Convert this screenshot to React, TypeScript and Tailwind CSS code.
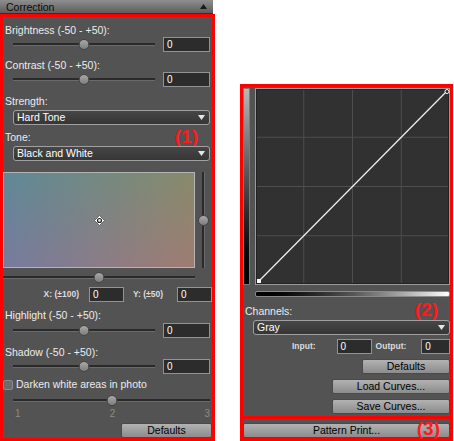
import React from 'react';

const panel = 'bg-[#535353]';

function Label({ children, className = '' }: { children: React.ReactNode; className?: string }) {
  return <div className={`h-[14px] leading-[14px] text-[10.5px] text-[#ececec] pl-[2px] ${className}`}>{children}</div>;
}

function Track({ className = '' }: { className?: string }) {
  return (
    <div className={`relative flex items-center ${className}`}>
      <div className="w-full h-[3px] bg-[#2a2a2a] border-b border-[#6a6a6a]" />
      <div className="absolute left-1/2 -translate-x-1/2 w-[11px] h-[11px] rounded-full bg-linear-to-b from-[#a8a8a8] to-[#7e7e7e] border border-[#444]" />
    </div>
  );
}

function NumBox({ className = 'w-[47px]' }: { className?: string }) {
  return (
    <div className={`h-[15px] bg-[#2c2c2c] border border-[#939393] text-[10px] leading-[13px] text-white pl-[3px] ${className}`}>
      0
    </div>
  );
}

function SliderRow() {
  return (
    <div className="flex items-center h-[15px]">
      <Track className="ml-[10px] w-[142px] h-[15px]" />
      <NumBox className="ml-[8px] w-[47px]" />
    </div>
  );
}

function Select({ value, className = '' }: { value: string; className?: string }) {
  return (
    <div
      className={`h-[15px] flex items-center justify-between bg-linear-to-b from-[#464646] to-[#363636] border border-[#a0a0a0] rounded-[3px] pl-[3px] pr-[4px] ${className}`}
    >
      <span className="text-[10.5px] leading-[13px] text-white">{value}</span>
      <svg width="7" height="5" viewBox="0 0 7 5">
        <path d="M0 0 H7 L3.5 5 Z" fill="#e6e6e6" />
      </svg>
    </div>
  );
}

function Button({ children, className = '' }: { children: React.ReactNode; className?: string }) {
  return (
    <div
      className={`h-[15px] flex items-center justify-center bg-linear-to-b from-[#b2b2b2] to-[#8c8c8c] border border-[#4a4a4a] rounded-[2px] text-[10.5px] text-[#000] ${className}`}
    >
      {children}
    </div>
  );
}

function Crosshair() {
  return (
    <svg width="11" height="11" viewBox="0 0 11 11">
      <path d="M5.5 0.5 L10.5 5.5 L5.5 10.5 L0.5 5.5 Z" fill="#ffffff" stroke="#333" strokeWidth="0.6" />
      <circle cx="5.5" cy="5.5" r="2.6" fill="#222" />
      <circle cx="5.5" cy="5.5" r="1.4" fill="#ddd" />
    </svg>
  );
}

function CurveGrid() {
  const xs = [48.75, 97.5, 146.25];
  const ys = [49.25, 98.5, 147.75];
  return (
    <svg width="195" height="197" viewBox="0 0 195 197" className="block">
      <rect x="0.5" y="0.5" width="194" height="196" fill="#313131" stroke="#9a9a9a" />
      <rect x="1.5" y="1.5" width="192" height="194" fill="none" stroke="#222" />
      {xs.map((x) => (
        <line key={x} x1={x} y1="2" x2={x} y2="195" stroke="#4e4e4e" strokeWidth="1" />
      ))}
      {ys.map((y) => (
        <line key={y} x1="2" y1={y} x2="193" y2={y} stroke="#4e4e4e" strokeWidth="1" />
      ))}
      <line x1="4" y1="193" x2="192" y2="3" stroke="#f2f2f2" strokeWidth="1.2" />
      <rect x="2" y="191" width="4" height="4" fill="#fff" />
      <circle cx="192" cy="3.5" r="2" fill="#222" stroke="#fff" strokeWidth="1" />
    </svg>
  );
}

export default function App() {
  return (
    <div className="w-[454px] h-[441px] bg-white flex overflow-hidden font-['Liberation_Sans',Arial,sans-serif]">
      {/* Left: Correction panel */}
      <div className="w-[215px] flex flex-col">
        <div className="w-[213px] h-[14px] flex items-center justify-between bg-linear-to-b from-[#8e8e8e] to-[#5e5e5e] border-b border-[#303030] pl-[6px] pr-[6px]">
          <span className="text-[10.5px] leading-[12px] text-[#0a0a0a]">Correction</span>
          <svg width="7" height="5" viewBox="0 0 7 5">
            <path d="M0 5 H7 L3.5 0 Z" fill="#1a1a1a" />
          </svg>
        </div>
        <div className={`flex-1 border-[3px] border-[#ff0000] ${panel} flex flex-col`}>
          <Label className="mt-[6px]">Brightness (-50 - +50):</Label>
          <SliderRow />
          <Label className="mt-[6px]">Contrast (-50 - +50):</Label>
          <SliderRow />
          <Label className="mt-[7px]">Strength:</Label>
          <Select value="Hard Tone" className="mt-[2px] ml-[10px] w-[197px]" />
          <div className="mt-[5px] h-[14px] flex items-center justify-between pr-[14px]">
            <Label>Tone:</Label>
            <span className="text-[19px] leading-none font-bold text-[#ff1a1a] mt-[-2px]">(1)</span>
          </div>
          <Select value="Black and White" className="mt-[2px] ml-[10px] w-[197px]" />

          <div className="mt-[11px] flex h-[96px]">
            <div className="w-[192px] h-full border border-[#b4b4b4] flex items-center justify-center bg-[linear-gradient(to_right,rgba(60,130,180,0.34),rgba(180,135,50,0.34)),linear-gradient(to_bottom,#718c88,#957792)]">
              <Crosshair />
            </div>
            <div className="relative flex-1 flex justify-center items-center">
              <div className="w-[3px] h-full bg-[#2a2a2a] border-r border-[#6a6a6a]" />
              <div className="absolute w-[11px] h-[11px] rounded-full bg-linear-to-b from-[#a8a8a8] to-[#7e7e7e] border border-[#444]" />
            </div>
          </div>
          <Track className="mt-[4px] w-[192px] h-[11px]" />

          <div className="mt-[4px] h-[14px] flex items-center justify-end">
            <span className="text-[8.5px] font-bold text-[#dcdcdc]">X: (±100)</span>
            <NumBox className="ml-[10px] w-[35px]" />
            <span className="ml-[9px] text-[8.5px] font-bold text-[#dcdcdc]">Y: (±50)</span>
            <NumBox className="ml-[14px] w-[35px]" />
          </div>

          <Label className="mt-[7px]">Highlight (-50 - +50):</Label>
          <div className="mt-[1px]">
            <SliderRow />
          </div>
          <Label className="mt-[7px]">Shadow (-50 - +50):</Label>
          <SliderRow />

          <div className="mt-[4px] h-[14px] flex items-center">
            <div className="w-[10px] h-[10px] bg-[#6c6c6c] border border-[#8c8c8c] rounded-[2px]" />
            <span className="ml-[3px] text-[10.5px] text-[#ececec]">Darken white areas in photo</span>
          </div>
          <Track className="mt-[2px] ml-[10px] w-[197px] h-[12px]" />
          <div className="mt-[2px] h-[12px] flex justify-between pl-[12px] pr-[2px] text-[10px] leading-[12px] text-[#8a8a8a]">
            <span>1</span>
            <span>2</span>
            <span>3</span>
          </div>
          <div className="mt-[3px] flex justify-end">
            <Button className="w-[91px]">Defaults</Button>
          </div>
        </div>
      </div>

      {/* Right: Curves panel */}
      <div className="ml-[25px] w-[213px] flex flex-col mt-[84px]">
        <div className={`h-[335px] border-[3px] border-[#ff0000] ${panel} flex flex-col`}>
          <div className="mt-[1px] flex h-[197px]">
            <div className="w-[7px] h-full border border-[#7a7a7a] bg-linear-to-b from-[#b8b8b8] via-[#4a4a4a] to-[#000000]" />
            <div className="ml-[5px]">
              <CurveGrid />
            </div>
          </div>
          <div className="mt-[6px] ml-[12px] h-[6px] border border-[#8a8a8a] rounded-[2px] bg-linear-to-r from-[#000000] via-[#555555] to-[#ffffff]" />
          <div className="mt-[7px] h-[14px] flex items-center justify-between pr-[12px]">
            <Label>Channels:</Label>
            <span className="text-[19px] leading-none font-bold text-[#ff1a1a] mt-[-4px]">(2)</span>
          </div>
          <Select value="Gray" className="mt-[2px] ml-[10px]" />
          <div className="mt-[4px] h-[14px] flex items-center">
            <span className="ml-[49px] text-[8.5px] font-bold text-[#dcdcdc]">Input:</span>
            <NumBox className="ml-[21px] w-[35px]" />
            <span className="ml-[4px] text-[8.5px] font-bold text-[#dcdcdc]">Output:</span>
            <NumBox className="ml-[15px] flex-1" />
          </div>
          <div className="mt-[6px] flex justify-end">
            <Button className="w-[88px]">Defaults</Button>
          </div>
          <div className="mt-[5px] flex justify-end">
            <Button className="w-[118px]">Load Curves...</Button>
          </div>
          <div className="mt-[5px] flex justify-end">
            <Button className="w-[118px]">Save Curves...</Button>
          </div>
        </div>
        <div className={`relative h-[22px] border-x-[3px] border-b-[3px] border-[#ff0000] ${panel} pt-[4px]`}>
          <Button className="w-full">Pattern Print...</Button>
          <span className="absolute right-[10px] top-[0px] text-[19px] leading-none font-bold text-[#ff1a1a]">(3)</span>
        </div>
      </div>
    </div>
  );
}
